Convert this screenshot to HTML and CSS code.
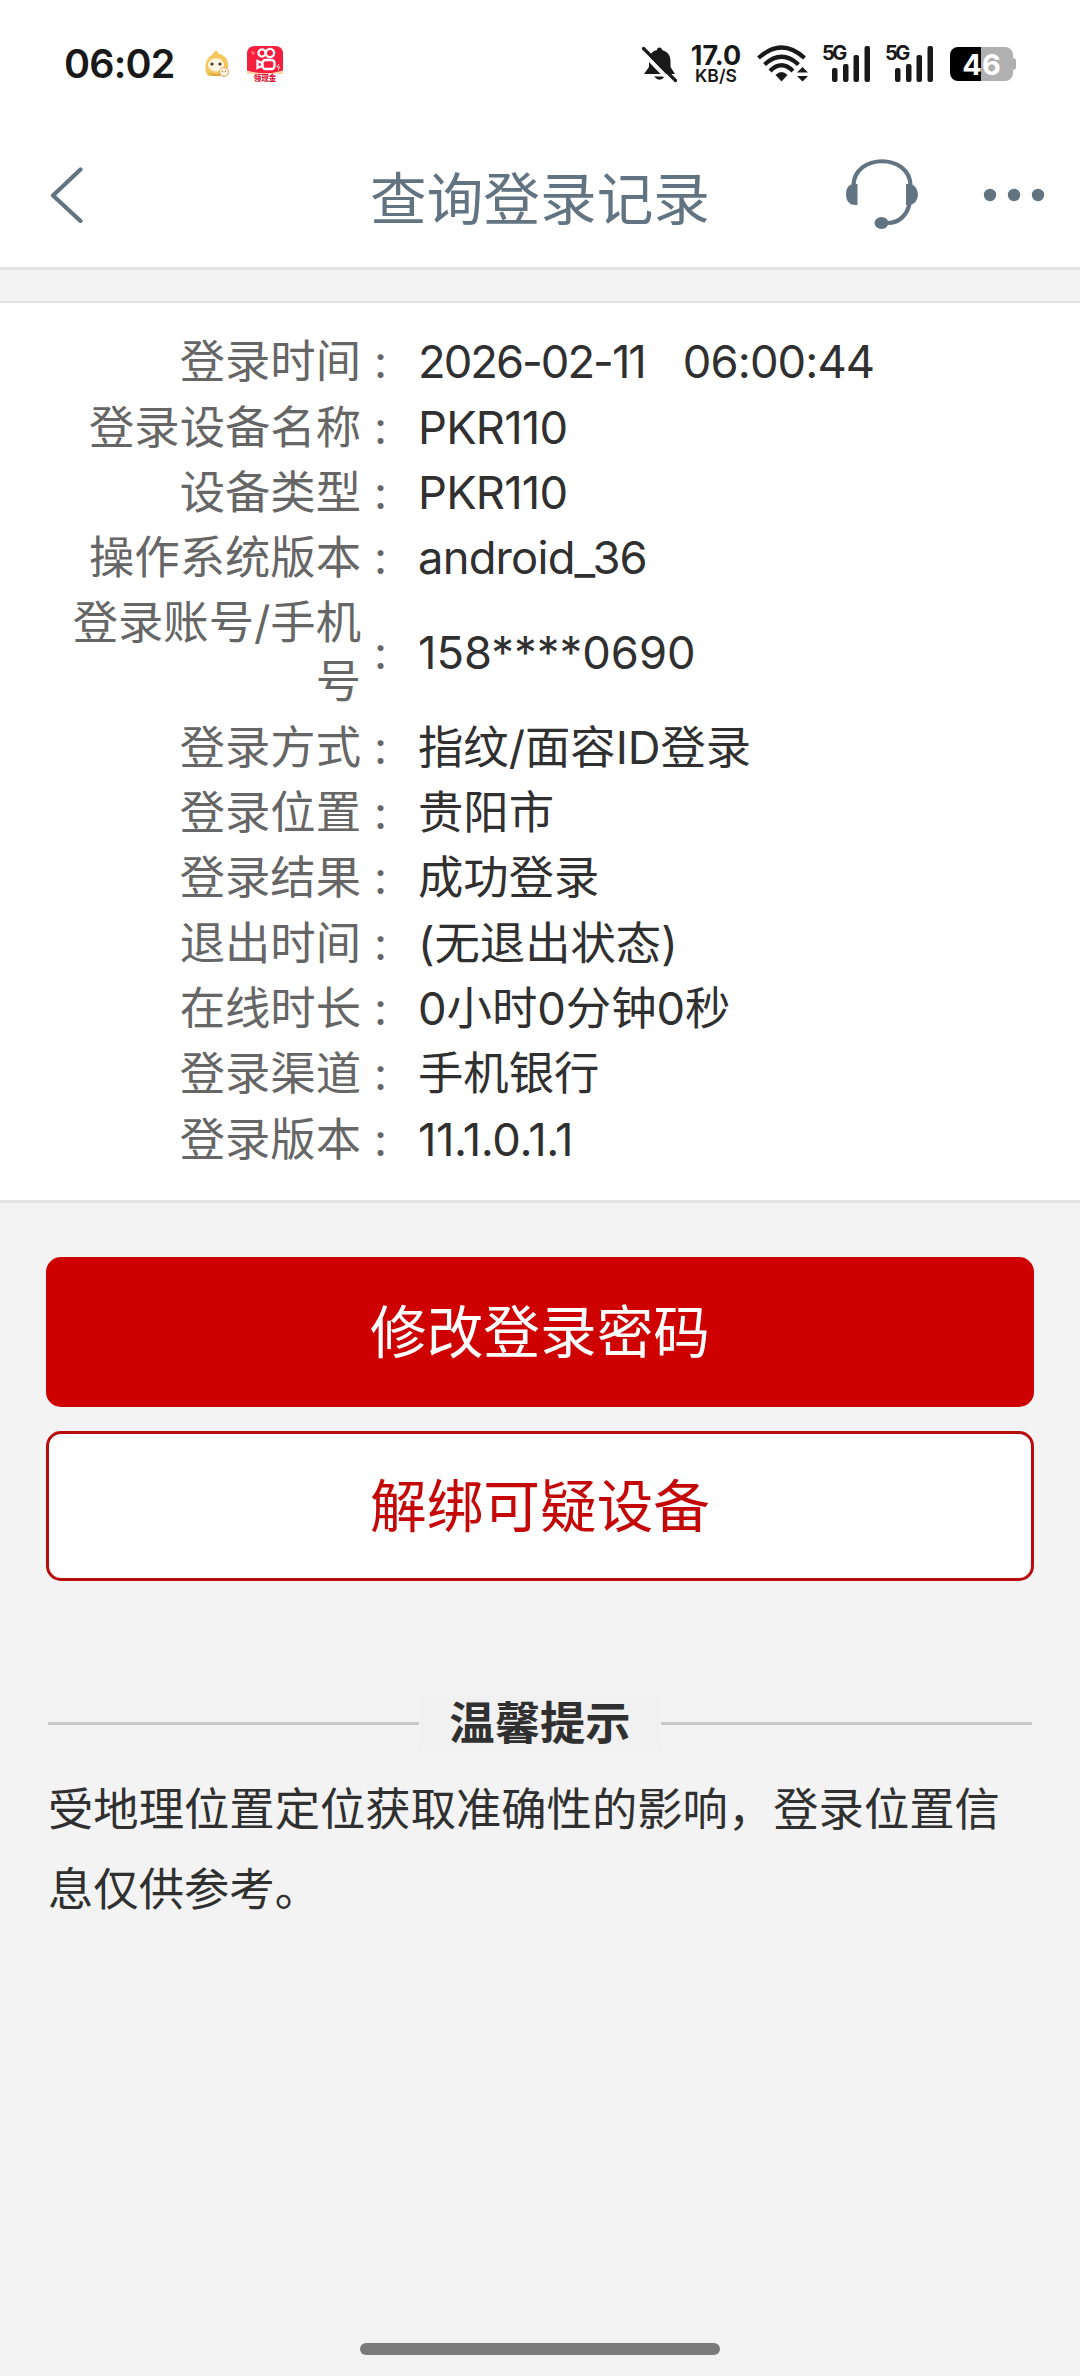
FILE: index.html
```html
<!DOCTYPE html>
<html lang="zh-CN">
<head>
<meta charset="utf-8">
<title>查询登录记录</title>
<link rel="stylesheet" href="styles.css">
</head>
<body>
<header class="status-bar">
  <div class="status-left">
    <span class="clock">06:02</span>
    <svg class="pet" width="26" height="30" viewBox="0 0 26 30">
      <path d="M12 1 L15 5 C21 6 25 11 24 18 L22 27 H4 C0 22 0 10 8 6 Z" fill="#f3c75c"/>
      <path d="M5 24 Q12 28 17 25" stroke="#dca63a" stroke-width="2" fill="none"/>
      <ellipse cx="12" cy="16" rx="8" ry="6.5" fill="#fff4e4"/>
      <path d="M4 12 Q12 5 20 12 L17 11 L12 9 L7 11 Z" fill="#ffe08a"/>
      <circle cx="8" cy="15" r="1.6" fill="#4a3a28"/><circle cx="16" cy="15" r="1.6" fill="#4a3a28"/>
      <circle cx="20" cy="23" r="4.5" fill="#fff0dc" stroke="#dfa55c"/>
      <circle cx="18.5" cy="22.5" r=".7" fill="#b9762d"/><circle cx="21.5" cy="22.5" r=".7" fill="#b9762d"/>
    </svg>
    <div class="app-badge">
      <svg width="36" height="28" viewBox="0 0 36 28">
        <path d="M8 0 H28 Q36 0 36 8 V25 Q18 31 0 25 V8 Q0 0 8 0Z" fill="#f5203f"/>
        <path d="M0 24.500 Q18 30 36 24.500 V28 H0Z" fill="#ffd9a8"/>
        <g fill="none" stroke="#fff" stroke-width="2.300">
          <circle cx="15" cy="7" r="3.600"/><circle cx="23" cy="7" r="4.100"/>
          <rect x="15.500" y="14" width="12" height="9" rx="3"/>
          <path d="M15 17 L10.500 15 V22 L15 20Z"/>
        </g>
        <path d="M32 18 l-2 3 h3 l-2 3" stroke="#ffe6b0" fill="none"/>
        <path d="M4 7 h4 M6 5 v4" stroke="#ff8b80" fill="none"/>
      </svg>
      <span class="badge-text">领现金</span>
    </div>
  </div>
  <div class="status-right">
    <svg class="bell" width="37" height="37" viewBox="0 0 37 37">
      <path d="M18.500 1.500 C20 1.500 21 2.500 21 4 C27 5.500 29.500 10 29.500 15 V21 L34 28 H3 L8 21 V15 C8 9 11 5 16 4 C16 2.500 17 1.500 18.500 1.500Z M13 30.500 H24 Q18.500 37 13 30.500Z" fill="#191919"/>
      <path d="M0 5 L31 37" stroke="#fff" stroke-width="4"/>
      <path d="M2.500 2.500 L34.500 34.500" stroke="#191919" stroke-width="3.200" stroke-linecap="round"/>
    </svg>
    <div class="net-speed"><span class="speed-value">17.0</span><span class="speed-unit">KB/S</span></div>
    <svg class="wifi" width="52" height="38" viewBox="0 0 52 38">
      <g fill="none" stroke="#191919" stroke-width="4.200">
        <path d="M1.500 13 Q24.500 -8 47.500 13"/>
        <path d="M7.500 19.500 Q24.500 4 41.500 19.500"/>
        <path d="M13 26 Q24.500 14.500 36 26"/>
      </g>
      <path d="M24.500 36.500 L18.500 30 Q24.500 24 30.500 30Z" fill="#191919"/>
      <path d="M45.500 22 L51 27.500 H40Z M45.500 36.500 L51 31 H40Z" fill="#191919"/>
    </svg>
    <div class="signal">
      <span class="gen">5G</span>
      <svg width="40" height="38" viewBox="0 0 40 38"><g fill="#191919"><rect x="1" y="23" width="5.500" height="14" rx="2"/><rect x="12" y="19" width="5.500" height="18" rx="2"/><rect x="22.500" y="10" width="5.500" height="27" rx="2"/><rect x="33.500" y="1" width="5.500" height="36" rx="2"/></g></svg>
    </div>
    <div class="signal">
      <span class="gen">5G</span>
      <svg width="40" height="38" viewBox="0 0 40 38"><g fill="#191919"><rect x="1" y="23" width="5.500" height="14" rx="2"/><rect x="12" y="19" width="5.500" height="18" rx="2"/><rect x="22.500" y="10" width="5.500" height="27" rx="2"/><rect x="33.500" y="1" width="5.500" height="36" rx="2"/></g></svg>
    </div>
    <div class="battery"><div class="battery-body">46</div><div class="battery-nub"></div></div>
  </div>
</header>
<nav class="nav-bar">
  <svg class="back" width="34" height="56" viewBox="0 0 34 56"><path d="M30.500 2.500 L3 28.500 L30.500 54" fill="none" stroke="#627482" stroke-width="4.200" stroke-linecap="round" stroke-linejoin="round"/></svg>
  <h1 class="title">查询登录记录</h1>
  <div class="nav-actions">
    <svg width="74" height="72" viewBox="0 0 74 72">
      <g fill="none" stroke="#627482" stroke-width="4.200">
        <path d="M8.500 27 C8.500 -6 65.500 -6 65.500 27"/>
        <path d="M64.500 45 C62 56 54 64 43 64"/>
      </g>
      <path d="M12.500 25 V46 Q1 47 1 35.500 Q1 25 9 25Z M61 25 V46 L64 46.500 Q73 44 73 35.500 Q72 27 66 25Z" fill="#627482"/>
      <ellipse cx="36.500" cy="64" rx="7" ry="6" fill="#627482"/>
    </svg>
    <svg width="62" height="14" viewBox="0 0 62 14" fill="#627482"><circle cx="7" cy="7" r="6.200"/><circle cx="31" cy="7" r="6.200"/><circle cx="55" cy="7" r="6.200"/></svg>
  </div>
</nav>
<main>
  <dl class="record">
    <div class="row"><dt>登录时间</dt><span class="colon">:</span><dd><span class="date">2026-02-11</span><span class="time">06:00:44</span></dd></div>
    <div class="row"><dt>登录设备名称</dt><span class="colon">:</span><dd class="model">PKR110</dd></div>
    <div class="row"><dt>设备类型</dt><span class="colon">:</span><dd class="model">PKR110</dd></div>
    <div class="row"><dt>操作系统版本</dt><span class="colon">:</span><dd class="system">android_36</dd></div>
    <div class="row"><dt>登录账号/手机号</dt><span class="colon">:</span><dd>158****0690</dd></div>
    <div class="row"><dt>登录方式</dt><span class="colon">:</span><dd>指纹/面容ID登录</dd></div>
    <div class="row"><dt>登录位置</dt><span class="colon">:</span><dd>贵阳市</dd></div>
    <div class="row"><dt>登录结果</dt><span class="colon">:</span><dd>成功登录</dd></div>
    <div class="row"><dt>退出时间</dt><span class="colon">:</span><dd>(无退出状态)</dd></div>
    <div class="row"><dt>在线时长</dt><span class="colon">:</span><dd>0小时0分钟0秒</dd></div>
    <div class="row"><dt>登录渠道</dt><span class="colon">:</span><dd>手机银行</dd></div>
    <div class="row"><dt>登录版本</dt><span class="colon">:</span><dd class="version">11.1.0.1.1</dd></div>
  </dl>
  <div class="actions">
    <button class="btn primary">修改登录密码</button>
    <button class="btn outline">解绑可疑设备</button>
  </div>
  <section class="tips">
    <h2 class="tips-title"><span>温馨提示</span></h2>
    <p class="tips-text">受地理位置定位获取准确性的影响，登录位置信息仅供参考。</p>
  </section>
</main>
<footer class="home"><div class="home-bar"></div></footer>
</body>
</html>
```

FILE: styles.css
```css
* { box-sizing: border-box; }
body {
  margin: 0;
  height: 2376px;
  display: flex;
  flex-direction: column;
  background: #f3f3f3;
  color: #303030;
  font-family: Inter, "Noto Sans CJK SC", sans-serif;
  font-size: 45.33px;
}
svg { display: block; flex: none; }

.status-bar {
  height: 128px;
  display: flex;
  justify-content: space-between;
  background: #fff;
  color: #191919;
  padding: 0 64px;
}
.status-left, .status-right { display: flex; align-items: center; height: 128px; }
.clock { width: 140px; font-size: 39.5px; font-weight: 600; letter-spacing: -0.8px; }
.pet { margin-right: 17px; }
.app-badge { width: 36px; height: 37px; display: flex; flex-direction: column; align-items: center; }
.badge-text { font-size: 7.5px; font-weight: 900; line-height: 9px; color: #d81b3c; white-space: nowrap; }
.net-speed { display: flex; flex-direction: column; align-items: center; width: 50px; margin: 0 16px 0 13px; font-weight: 700; }
.speed-value { font-size: 27px; line-height: 22px; }
.speed-unit { font-size: 17.5px; line-height: 17px; font-weight: 600; }
.signal { width: 63px; height: 38px; display: flex; align-items: flex-start; }
.wifi { margin-right: 14px; }
.gen { width: 9px; font-size: 20px; line-height: 17px; font-weight: 700; letter-spacing: -2.5px; margin-left: -1px; }
.battery { display: flex; align-items: center; width: 66px; margin-left: 1px; }
.battery-body {
  width: 63px;
  height: 34px;
  border-radius: 8px;
  background: linear-gradient(90deg, #000 31px, #b0b0b0 31px);
  color: #fff;
  font-size: 29px;
  line-height: 35px;
  font-weight: 700;
  text-align: center;
}
.battery-nub { width: 3px; height: 12px; border-radius: 0 3px 3px 0; background: #b0b0b0; }

.nav-bar {
  height: 142px;
  display: grid;
  grid-template-columns: 1fr auto 1fr;
  align-items: center;
  padding: 0 35px 6px;
  background: #fff;
  border-bottom: 3px solid #e3e3e3;
}
.back { margin-left: 15px; }
.title { margin: 10px 0 0; color: #627482; font-size: 56.67px; font-weight: 400; line-height: 70px; }
.nav-actions { display: flex; align-items: center; justify-content: flex-end; gap: 64px; }

.record {
  margin: 31px 0 0;
  height: 902px;
  padding: 27px 0 0;
  background: #fff;
  border-top: 2px solid #e0e0e0;
  border-bottom: 3px solid #e3e3e3;
}
.row {
  display: grid;
  grid-template-columns: 313px 57px 1fr;
  align-items: center;
  padding: 3.2px 0 3.2px 48px;
  line-height: 58.93px;
}
dt { color: #666; text-align: right; }
.colon { color: #666; padding-left: 13px; }
dd { margin: 0; white-space: nowrap; }
.date { margin-right: 38px; letter-spacing: -2px; }
.time { letter-spacing: -0.9px; }
.model, .system { letter-spacing: -0.8px; }
.version { letter-spacing: -0.4px; }

.actions { display: flex; flex-direction: column; gap: 24px; padding: 54px 46px 0; }
.btn {
  height: 150px;
  padding: 0 0 9px;
  border: 3px solid #cf0000;
  border-radius: 15px;
  font: inherit;
  font-size: 56.67px;
}
.primary { background: #cf0000; color: #fff; }
.outline { background: #fff; color: #c40808; border-color: #b90c0c; }

.tips { padding: 115px 48px 0; }
.tips-title {
  margin: 0;
  display: flex;
  align-items: center;
  font-size: 45.33px;
  font-weight: 700;
  line-height: 55px;
}
.tips-title::before, .tips-title::after { content: ""; flex: 1; height: 3px; background: #c8c8c8; }
.tips-title span { width: 242px; text-align: center; background: #f1f1f1; }
.tips-text { margin: 19px 0 0; line-height: 80px; }

.home { margin-top: auto; height: 33px; display: flex; justify-content: center; }
.home-bar { width: 360px; height: 12px; border-radius: 6px; background: #7b7b7b; }
```
